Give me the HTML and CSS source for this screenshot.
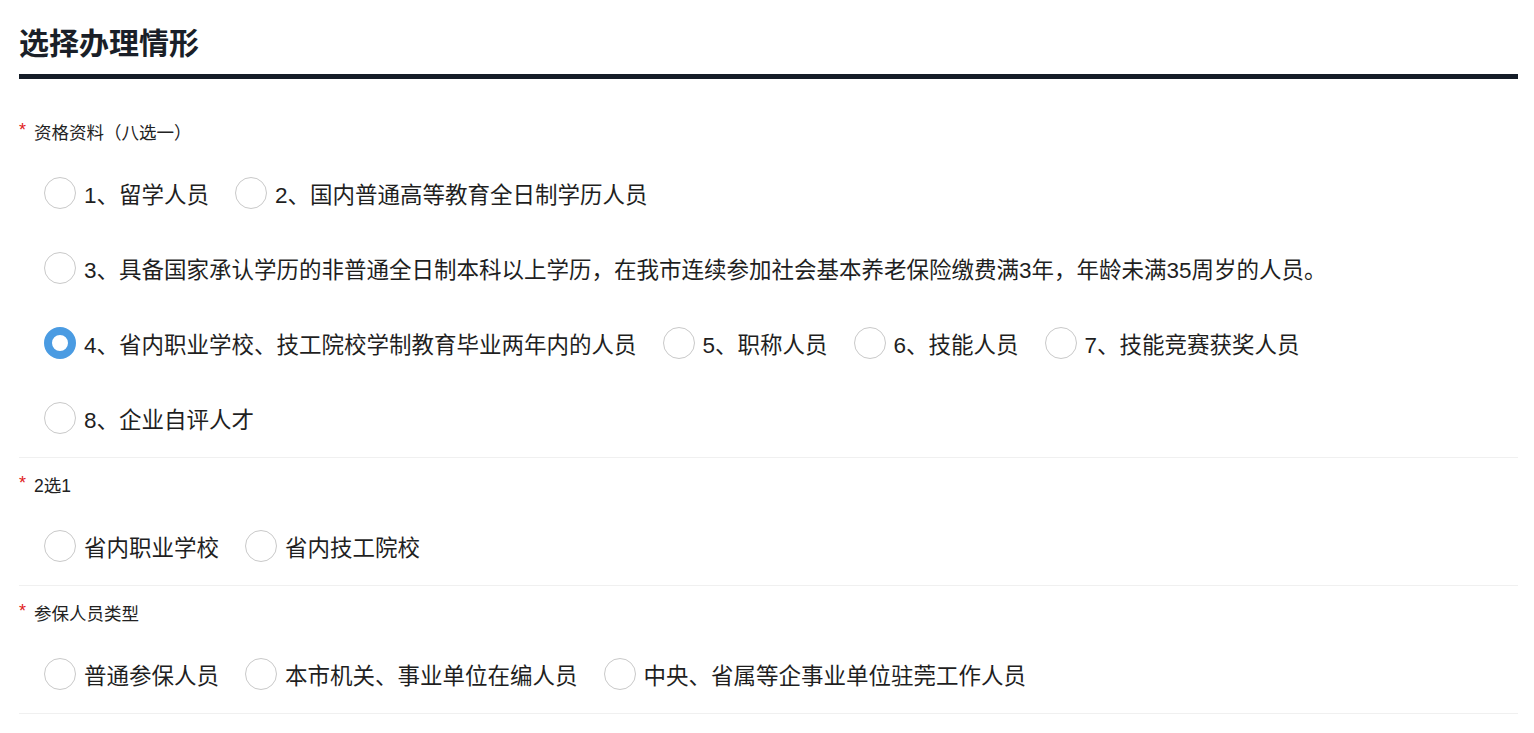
FILE: index.html
```html
<!DOCTYPE html>
<html lang="zh-CN">

<head>
  <meta charset="UTF-8">
  <meta name="viewport" content="width=device-width, initial-scale=1.0">
  <title>选择办理情形</title>
  <link rel="stylesheet" href="styles.css">
</head>

<body>
  <div class="page">

    <h2 class="page-title">选择办理情形</h2>

    <div class="form-item first">
      <div class="form-label"><span class="required">*</span>资格资料（八选一）</div>
      <div class="radio-group">
        <label class="radio"><input type="radio" name="zgzl"><span>1、留学人员</span></label>
        <label class="radio"><input type="radio" name="zgzl"><span>2、国内普通高等教育全日制学历人员</span></label>
        <div class="break"></div>
        <label class="radio"><input type="radio" name="zgzl"><span>3、具备国家承认学历的非普通全日制本科以上学历，在我市连续参加社会基本养老保险缴费满3年，年龄未满35周岁的人员。</span></label>
        <div class="break"></div>
        <label class="radio"><input type="radio" name="zgzl" checked><span>4、省内职业学校、技工院校学制教育毕业两年内的人员</span></label>
        <label class="radio"><input type="radio" name="zgzl"><span>5、职称人员</span></label>
        <label class="radio"><input type="radio" name="zgzl"><span>6、技能人员</span></label>
        <label class="radio"><input type="radio" name="zgzl"><span>7、技能竞赛获奖人员</span></label>
        <div class="break"></div>
        <label class="radio"><input type="radio" name="zgzl"><span>8、企业自评人才</span></label>
      </div>
    </div>

    <div class="form-item">
      <div class="form-label"><span class="required">*</span>2选1</div>
      <div class="radio-group">
        <label class="radio"><input type="radio" name="xx"><span>省内职业学校</span></label>
        <label class="radio"><input type="radio" name="xx"><span>省内技工院校</span></label>
      </div>
    </div>

    <div class="form-item">
      <div class="form-label"><span class="required">*</span>参保人员类型</div>
      <div class="radio-group">
        <label class="radio"><input type="radio" name="cb"><span>普通参保人员</span></label>
        <label class="radio"><input type="radio" name="cb"><span>本市机关、事业单位在编人员</span></label>
        <label class="radio"><input type="radio" name="cb"><span>中央、省属等企事业单位驻莞工作人员</span></label>
      </div>
    </div>

  </div>
</body>

</html>
```

FILE: styles.css
```css
* {
  margin: 0px;
  padding: 0px;
  box-sizing: border-box;
  font-family: "Liberation Sans", "Noto Sans CJK SC", sans-serif;
}

body {
  background: #fff;
  color: #1f1f1f;
}

.page {
  padding: 0 16px 0 19px;
}

.page-title {
  font-size: 30px;
  font-weight: bold;
  line-height: 40px;
  padding-top: 24px;
  padding-bottom: 10px;
  color: #1a1f28;
  border-bottom: 5px solid #141c27;
}

.form-item {
  padding-top: 14px;
  padding-bottom: 2px;
  border-bottom: 1px solid #f0f0f0;
}

.form-item.first {
  padding-top: 40px;
}

.form-label {
  display: flex;
  align-items: center;
  height: 24px;
  font-size: 17.5px;
  color: #222;
}

.required {
  color: #e02020;
  font-size: 18px;
  width: 15px;
  position: relative;
  top: -1px;
}

.radio-group {
  display: flex;
  flex-wrap: wrap;
  column-gap: 26px;
  padding-left: 25px;
  margin-top: 12px;
}

.break {
  flex-basis: 100%;
  height: 0;
}

.radio {
  display: flex;
  align-items: center;
  height: 75px;
  font-size: 22.5px;
  color: #1f1f1f;
  cursor: pointer;
}

.radio input {
  appearance: none;
  -webkit-appearance: none;
  width: 32px;
  height: 32px;
  border: 1px solid #c9c9c9;
  border-radius: 50%;
  background: #fff;
  margin-right: 8px;
  flex-shrink: 0;
}

.radio input:checked {
  border: 8px solid #4a9be2;
}
```
